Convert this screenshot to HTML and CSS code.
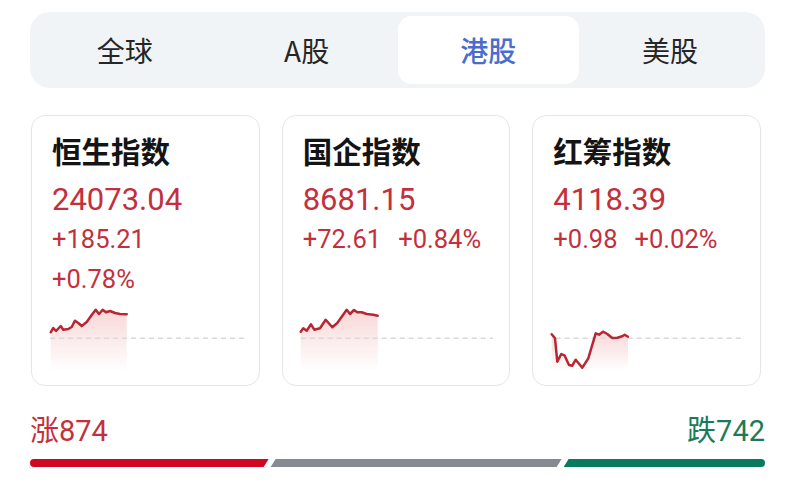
FILE: index.html
```html
<!DOCTYPE html>
<html lang="zh">
<head>
<meta charset="utf-8">
<link rel="stylesheet" href="styles.css">
</head>
<body>
<div class="page">
  <div class="tabs">
    <div class="tab">全球</div>
    <div class="tab">A股</div>
    <div class="tab active">港股</div>
    <div class="tab">美股</div>
  </div>

  <div class="cards">
    <div class="card">
      <div class="title">恒生指数</div>
      <div class="price">24073.04</div>
      <div class="chg">+185.21</div>
      <div class="chg">+0.78%</div>
      <svg class="spark" viewBox="0 0 227 75" width="227" height="75">
        <defs>
          <linearGradient id="g1" x1="0" y1="0" x2="0" y2="1">
            <stop offset="0" stop-color="#e04848" stop-opacity="0.22"/>
            <stop offset="1" stop-color="#e04848" stop-opacity="0"/>
          </linearGradient>
        </defs>
        <polygon fill="url(#g1)" points="18.7,33.3 21.3,29 24,32 28.7,27 31.3,30.7 36.3,30 39.7,28 43,21.7 46.3,24 49.7,27 54.7,23 59.7,16 63.7,10.7 67,15 70.7,10.7 74,13.3 78,12 83,14 88,15 94.7,15.3 94.7,72 18.7,72"/>
        <line class="base" x1="18" y1="39.3" x2="212" y2="39.3"/>
        <polyline class="line" points="18.7,33.3 21.3,29 24,32 28.7,27 31.3,30.7 36.3,30 39.7,28 43,21.7 46.3,24 49.7,27 54.7,23 59.7,16 63.7,10.7 67,15 70.7,10.7 74,13.3 78,12 83,14 88,15 94.7,15.3"/>
      </svg>
    </div>

    <div class="card">
      <div class="title">国企指数</div>
      <div class="price">8681.15</div>
      <div class="chg"><span>+72.61</span><span>+0.84%</span></div>
      <svg class="spark" viewBox="0 0 227 75" width="227" height="75">
        <defs>
          <linearGradient id="g2" x1="0" y1="0" x2="0" y2="1">
            <stop offset="0" stop-color="#e04848" stop-opacity="0.22"/>
            <stop offset="1" stop-color="#e04848" stop-opacity="0"/>
          </linearGradient>
        </defs>
        <polygon fill="url(#g2)" points="17.7,32.7 20.3,29.3 23.7,31.7 28,25.3 31.3,30.7 37,29.3 42.7,20.7 49.3,28.3 54.3,24 63.7,10.7 67,15 71,11 74.3,13.3 78.7,13.3 83.7,15 90.3,15.7 94.7,16.7 94.7,72 17.7,72"/>
        <line class="base" x1="17.7" y1="39.3" x2="210" y2="39.3"/>
        <polyline class="line" points="17.7,32.7 20.3,29.3 23.7,31.7 28,25.3 31.3,30.7 37,29.3 42.7,20.7 49.3,28.3 54.3,24 63.7,10.7 67,15 71,11 74.3,13.3 78.7,13.3 83.7,15 90.3,15.7 94.7,16.7"/>
      </svg>
    </div>

    <div class="card">
      <div class="title">红筹指数</div>
      <div class="price">4118.39</div>
      <div class="chg"><span>+0.98</span><span>+0.02%</span></div>
      <svg class="spark" viewBox="0 0 227 75" width="227" height="75">
        <defs>
          <linearGradient id="g3" x1="0" y1="0" x2="0" y2="1">
            <stop offset="0" stop-color="#e04848" stop-opacity="0.22"/>
            <stop offset="1" stop-color="#e04848" stop-opacity="0"/>
          </linearGradient>
        </defs>
        <polygon fill="url(#g3)" points="18.7,35.3 22,39.3 24.3,62.7 28.3,55 31.7,56.7 36,66 39.3,66.7 42.7,60.7 49.3,68.7 55.3,59.3 62.7,34.3 66,35.7 70,32.7 74.3,35 79.3,39 84.3,38.7 89.3,37.3 91.7,35.7 95,37.7 95,72 18.7,72"/>
        <line class="base" x1="22.7" y1="39.3" x2="211" y2="39.3"/>
        <polyline class="line" points="18.7,35.3 22,39.3 24.3,62.7 28.3,55 31.7,56.7 36,66 39.3,66.7 42.7,60.7 49.3,68.7 55.3,59.3 62.7,34.3 66,35.7 70,32.7 74.3,35 79.3,39 84.3,38.7 89.3,37.3 91.7,35.7 95,37.7"/>
      </svg>
    </div>
  </div>

  <div class="breadth">
    <div class="counts">
      <span class="up">涨874</span>
      <span class="down">跌742</span>
    </div>
    <div class="bars">
      <div class="seg seg-up" style="flex-grow:237"></div>
      <div class="seg seg-flat" style="flex-grow:289"></div>
      <div class="seg seg-down" style="flex-grow:200"></div>
    </div>
  </div>
</div>
</body>
</html>
```

FILE: styles.css
```css
html, body {
  margin: 0;
  padding: 0;
  background: #ffffff;
}

body {
  font-family: "Roboto", "Noto Sans CJK SC", sans-serif;
  color: #1a1a1a;
}

.page {
  width: 735px;
  padding: 12px 0 0 30px;
}

.tabs {
  display: flex;
  height: 76px;
  box-sizing: border-box;
  padding: 4px;
  background: #f1f4f7;
  border-radius: 20px;
}

.tab {
  flex: 1;
  display: flex;
  align-items: center;
  justify-content: center;
  font-family: "Noto Sans CJK SC", sans-serif;
  font-size: 28px;
  color: #262626;
  border-radius: 14px;
}

.tab.active {
  background: #ffffff;
  color: #4a6dcc;
  font-weight: 500;
}

.cards {
  display: flex;
  gap: 22px;
  margin: 27px 4px 0 1px;
}

.card {
  flex: 1;
  height: 271px;
  box-sizing: border-box;
  border: 1px solid #e6e6e8;
  border-radius: 14px;
  padding: 15px 0 0 20px;
  display: flex;
  flex-direction: column;
  overflow: hidden;
}

.title {
  font-family: "Noto Sans CJK SC", sans-serif;
  font-weight: 700;
  font-size: 29.5px;
  line-height: 38px;
  color: #141414;
}

.price {
  margin-top: 13px;
  font-size: 31px;
  line-height: 36px;
  color: #c3303b;
}

.chg {
  margin-top: 2px;
  font-size: 25.5px;
  line-height: 38px;
  color: #c3303b;
  display: flex;
  gap: 17px;
}

.spark {
  display: block;
  margin: auto 0 11px -20px;
  overflow: visible;
}

.spark .line {
  fill: none;
  stroke: #b82633;
  stroke-width: 2.5;
  stroke-linejoin: round;
  stroke-linecap: round;
}

.spark .base {
  stroke: #d9d9db;
  stroke-width: 1.5;
  stroke-dasharray: 5 4;
}

.breadth {
  margin-top: 29px;
}

.counts {
  display: flex;
  justify-content: space-between;
  font-family: "Roboto", "Noto Sans CJK SC", sans-serif;
  font-size: 29px;
  line-height: 32px;
}

.up {
  color: #c3303b;
}

.down {
  color: #1b7a5b;
}

.bars {
  display: flex;
  gap: 1px;
  margin-top: 12px;
  height: 8px;
}

.seg {
  flex-basis: 0;
  height: 8px;
}

.seg-up {
  background: #d0081f;
  border-radius: 4px 0 0 4px;
  clip-path: polygon(0 0, 100% 0, calc(100% - 5px) 100%, 0 100%);
}

.seg-flat {
  background: #878a93;
  clip-path: polygon(5px 0, 100% 0, calc(100% - 5px) 100%, 0 100%);
  margin-left: 1px;
}

.seg-down {
  background: #0a7a5e;
  border-radius: 0 4px 4px 0;
  clip-path: polygon(5px 0, 100% 0, 100% 100%, 0 100%);
  margin-left: 1px;
}
```
